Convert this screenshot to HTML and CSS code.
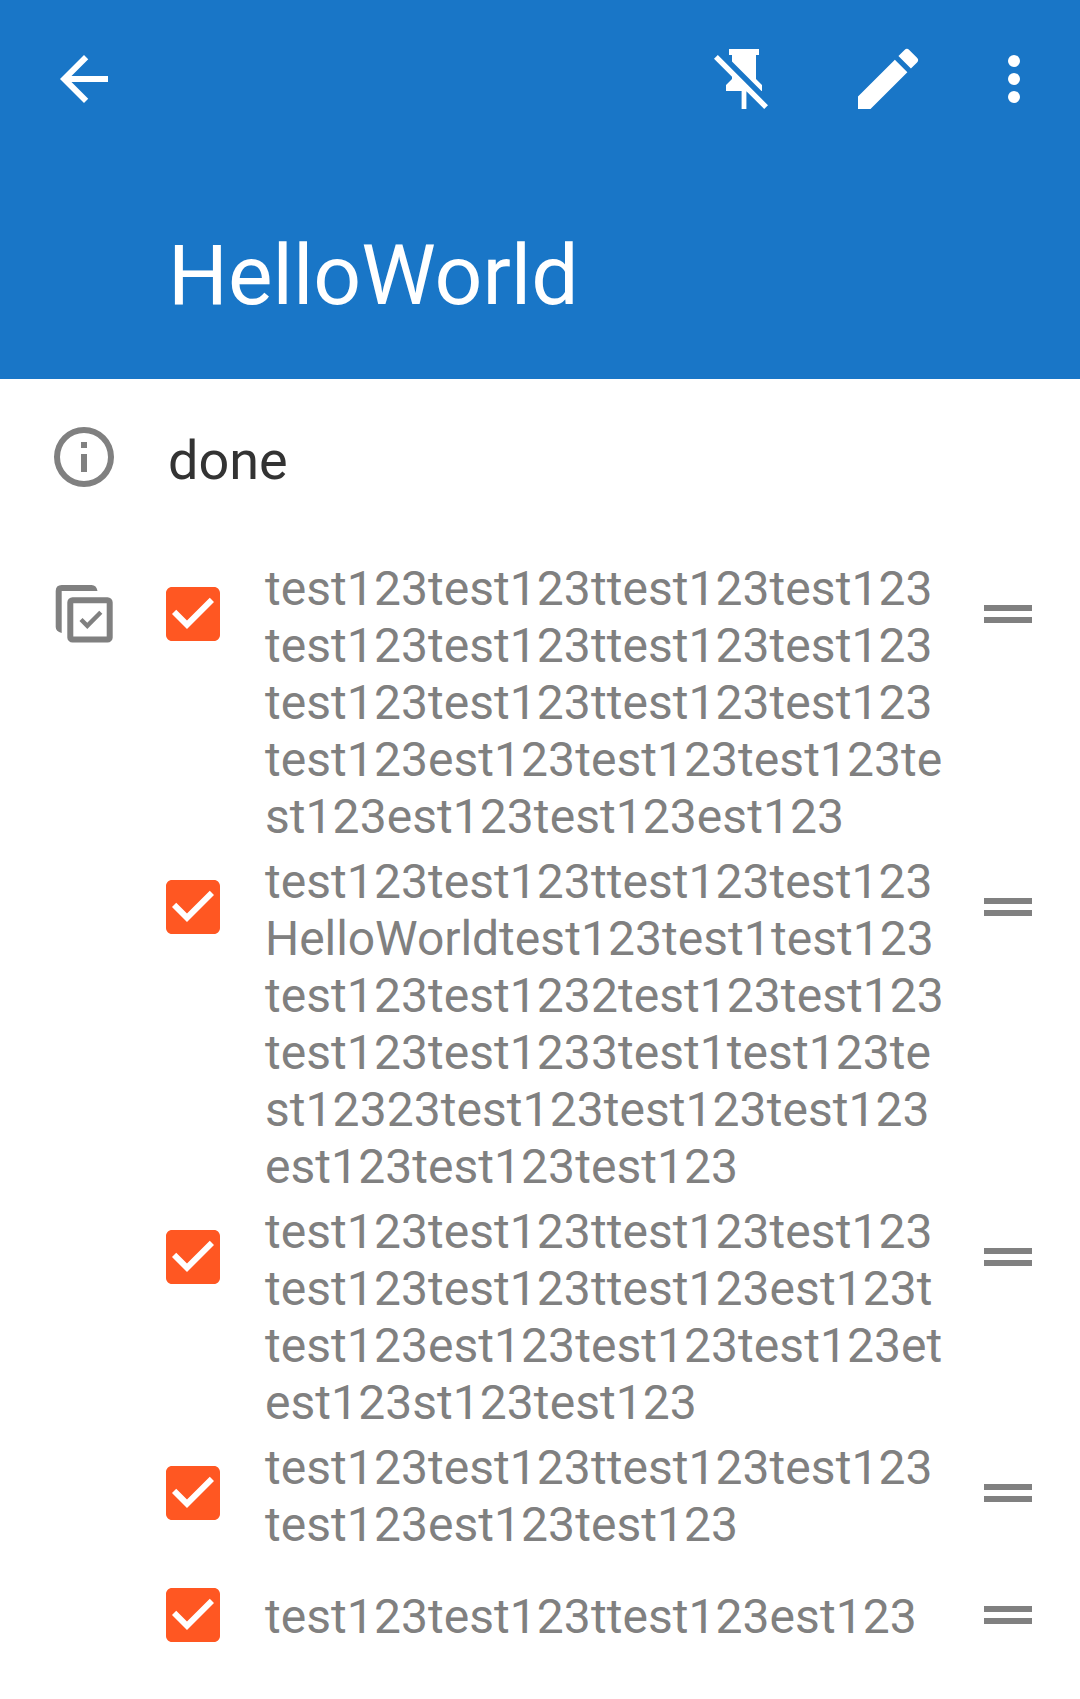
FILE: index.html
```html
<!DOCTYPE html>
<html lang="en">
<head>
<meta charset="utf-8">
<title>HelloWorld</title>
<link rel="stylesheet" href="styles.css">
</head>
<body>
<svg class="defs" aria-hidden="true">
  <symbol id="checkbox" viewBox="0 0 24 24">
    <path fill="#fff" d="M4 4h16v16H4z"/>
    <path fill="#ff5722" d="M19 3H5c-1.11 0-2 .9-2 2v14c0 1.1.89 2 2 2h14c1.11 0 2-.9 2-2V5c0-1.1-.89-2-2-2zm-9 14l-5-5 1.41-1.41L10 14.17l7.59-7.59L19 8l-9 9z"/>
  </symbol>
  <symbol id="handle" viewBox="0 0 24 24"><path d="M20 9H4v2h16V9zM4 15h16v-2H4v2z"/></symbol>
</svg>
<header class="header">
  <div class="toolbar">
    <svg class="icon" viewBox="0 0 24 24"><path d="M20 11H7.83l5.59-5.59L12 4l-8 8 8 8 1.41-1.41L7.83 13H20v-2z"/></svg>
    <div class="actions">
      <svg class="icon" viewBox="0 0 24 24"><path d="M2 5.27L3.28 4 20 20.72 18.73 22l-5.93-5.93V22h-1.6v-6H6v-2l2-2v-.73l-6-6M16 12l2 2v2h-.18L8 6.18V4H7V2h10v2h-1v8z"/></svg>
      <svg class="icon" viewBox="1.2 1.2 21.6 21.6"><path d="M3 17.25V21h3.75L17.81 9.94l-3.75-3.75L3 17.25zM20.71 7.04a1 1 0 0 0 0-1.41l-2.34-2.34a1 1 0 0 0-1.41 0l-1.83 1.83 3.75 3.75 1.83-1.83z"/></svg>
      <svg class="icon more" viewBox="0 0 24 24"><circle cx="12" cy="6" r="2"/><circle cx="12" cy="12" r="2"/><circle cx="12" cy="18" r="2"/></svg>
    </div>
  </div>
  <h1 class="title">HelloWorld</h1>
</header>
<main>
  <section class="status">
    <svg class="icon" viewBox="0 0 24 24"><path d="M11 7h2v2h-2zm0 4h2v6h-2zm1-9a10 10 0 1 0 0 20 10 10 0 0 0 0-20zm0 18a8 8 0 1 1 0-16 8 8 0 0 1 0 16z"/></svg>
    <p class="status-text">done</p>
  </section>
  <section class="checklist">
    <svg class="icon list-icon" viewBox="0 0 72 72">
      <path d="M13.7 55Q7.7 53.5 7.7 49V13Q7.7 7 13.7 7H43.5Q48.5 7 49.5 13H13.7Z"/>
      <g fill="none" stroke="currentColor">
        <rect x="22.3" y="22.2" width="39.4" height="39.4" rx="2.2" stroke-width="6"/>
        <path stroke-width="4.4" d="M33 41.5l6.3 6.3 13.5-13.5"/>
      </g>
    </svg>
    <ul class="items">
      <li class="item"><svg class="icon"><use href="#checkbox"/></svg><p class="text">test123test123ttest123test123<br>test123test123ttest123test123<br>test123test123ttest123test123<br>test123est123test123test123te<br>st123est123test123est123</p><svg class="icon"><use href="#handle"/></svg></li>
      <li class="item"><svg class="icon"><use href="#checkbox"/></svg><p class="text">test123test123ttest123test123<br><span class="tight">HelloWorld</span>test123test1test123<br>test123test1232test123test123<br>test123test1233test1test123te<br>st12323test123test123test123<br>est123test123test123</p><svg class="icon"><use href="#handle"/></svg></li>
      <li class="item"><svg class="icon"><use href="#checkbox"/></svg><p class="text">test123test123ttest123test123<br>test123test123ttest123est123t<br>test123est123test123test123et<br>est123st123test123</p><svg class="icon"><use href="#handle"/></svg></li>
      <li class="item"><svg class="icon"><use href="#checkbox"/></svg><p class="text">test123test123ttest123test123<br>test123est123test123</p><svg class="icon"><use href="#handle"/></svg></li>
      <li class="item"><svg class="icon"><use href="#checkbox"/></svg><p class="text">test123test123ttest123est123</p><svg class="icon"><use href="#handle"/></svg></li>
    </ul>
  </section>
</main>
</body>
</html>
```
FILE: styles.css
```css
* {
  box-sizing: border-box;
}

body {
  margin: 0;
  background: #fff;
  color: #808080;
  font-family: Roboto, sans-serif;
}

h1, p, ul {
  margin: 0;
  padding: 0;
  font-weight: 400;
}

.defs {
  display: none;
}

.icon {
  display: block;
  flex: none;
  width: 72px;
  height: 72px;
  fill: currentColor;
}

.header {
  height: 379px;
  background: #1976c7;
  color: #fff;
}

.toolbar {
  display: flex;
  justify-content: space-between;
  padding: 43px 30px 0 48px;
}

.actions {
  display: flex;
  gap: 72px;
}

.more {
  margin-left: -18px;
}

.title {
  padding: 111px 0 0 168px;
  font-size: 84px;
  line-height: 100px;
}

.status {
  display: flex;
  gap: 48px;
  height: 177px;
  padding: 42px 48px 0;
}

.status-text {
  padding-top: 8px;
  color: #333;
  font-size: 54px;
  line-height: 64px;
}

.checklist {
  display: flex;
  padding: 0 36px 0 48px;
}

.list-icon {
  margin: 22px 37px 0 0;
}

.items {
  flex: 1;
  list-style: none;
}

.item {
  display: flex;
  align-items: flex-start;
  padding: 4px 0;
}

.item .icon {
  margin-top: 18px;
}

.text {
  flex: 1;
  padding-left: 36px;
  font-size: 48px;
  letter-spacing: 0.055px;
  line-height: 57px;
  white-space: nowrap;
}

.tight {
  letter-spacing: -0.06px;
}

.item:last-child .text {
  padding-top: 27px;
}
```
